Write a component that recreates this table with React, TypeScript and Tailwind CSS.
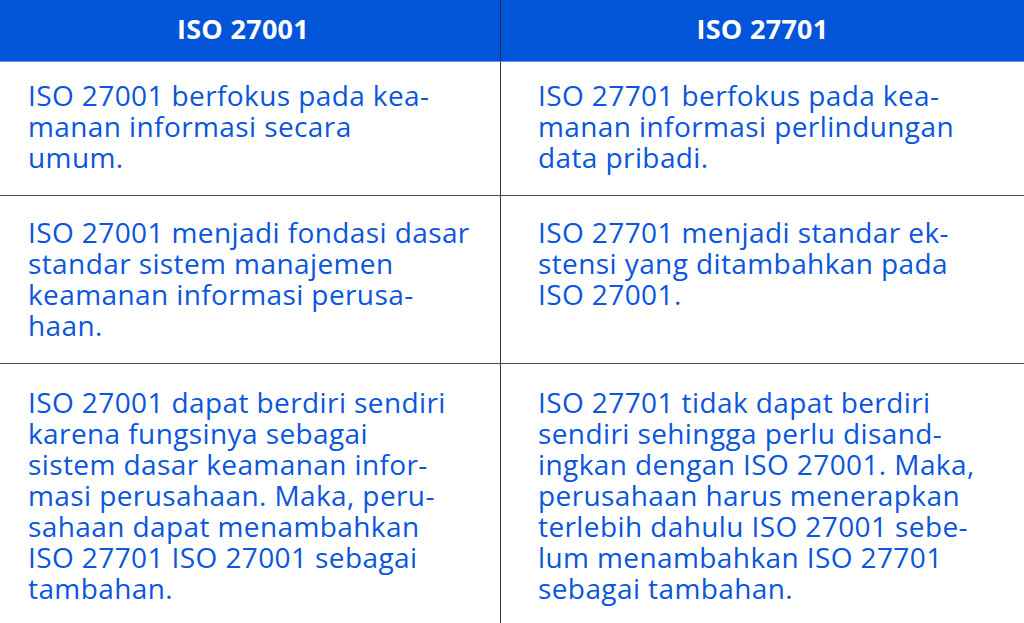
import React from "react";

const rows: { h: string; pt: string; left: string[]; right: string[] }[] = [
  {
    h: "h-[134px]",
    pt: "pt-[18px]",
    left: ["ISO 27001 berfokus pada kea-", "manan informasi secara", "umum."],
    right: ["ISO 27701 berfokus pada kea-", "manan informasi perlindungan", "data pribadi."],
  },
  {
    h: "h-[168px]",
    pt: "pt-[21px]",
    left: [
      "ISO 27001 menjadi fondasi dasar",
      "standar sistem manajemen",
      "keamanan informasi perusa-",
      "haan.",
    ],
    right: ["ISO 27701 menjadi standar ek-", "stensi yang ditambahkan pada", "ISO 27001."],
  },
  {
    h: "flex-1",
    pt: "pt-[23px]",
    left: [
      "ISO 27001 dapat berdiri sendiri",
      "karena fungsinya sebagai",
      "sistem dasar keamanan infor-",
      "masi perusahaan. Maka, peru-",
      "sahaan dapat menambahkan",
      "ISO 27701 ISO 27001 sebagai",
      "tambahan.",
    ],
    right: [
      "ISO 27701 tidak dapat berdiri",
      "sendiri sehingga perlu disand-",
      "ingkan dengan ISO 27001. Maka,",
      "perusahaan harus menerapkan",
      "terlebih dahulu ISO 27001 sebe-",
      "lum menambahkan ISO 27701",
      "sebagai tambahan.",
    ],
  },
];

function Lines({ lines }: { lines: string[] }) {
  return <p className="whitespace-pre leading-[31px]">{lines.join("\n")}</p>;
}

export default function App() {
  return (
    <div
      className="w-[1024px] h-[623px] bg-white flex flex-col overflow-hidden text-[#0a56dc]"
      style={{ fontFamily: '"Open Sans", "Noto Sans", sans-serif' }}
    >
      <div className="flex h-[62px] bg-[#0254d9] border-b border-[#5f93ea] text-white font-bold text-[27px] tracking-[0.3px]">
        <div className="w-[500px] flex items-center justify-center pr-[14px] pb-[2px]">ISO 27001</div>
        <div className="w-px bg-[#1b2a44]" />
        <div className="flex-1 flex items-center justify-center pb-[2px]">ISO 27701</div>
      </div>
      {rows.map((r, i) => (
        <div
          key={i}
          className={`flex ${r.h} ${i < rows.length - 1 ? "border-b border-[#4a4a4a]" : ""} text-[28px] tracking-[0.4px]`}
        >
          <div className={`w-[500px] pl-[28px] ${r.pt}`}>
            <Lines lines={r.left} />
          </div>
          <div className="w-px bg-[#333]" />
          <div className={`flex-1 pl-[37px] ${r.pt}`}>
            <Lines lines={r.right} />
          </div>
        </div>
      ))}
    </div>
  );
}
